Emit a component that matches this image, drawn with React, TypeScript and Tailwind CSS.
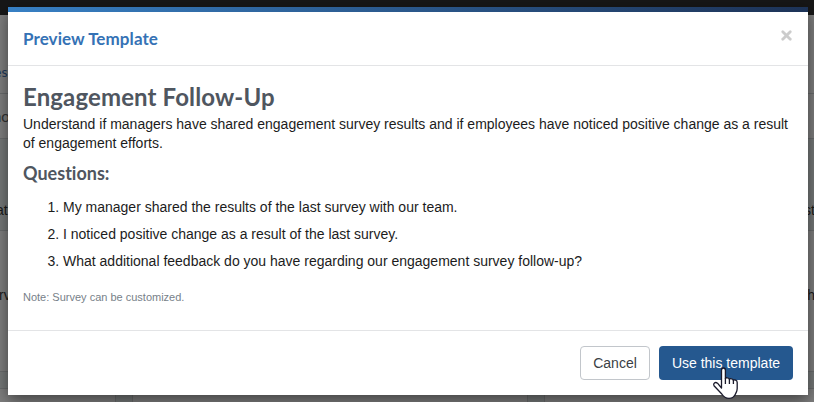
import { X } from 'lucide-react';

const questions = [
  'My manager shared the results of the last survey with our team.',
  'I noticed positive change as a result of the last survey.',
  'What additional feedback do you have regarding our engagement survey follow-up?',
];

// Page under the dimmed backdrop, only its edges show around the dialog
function PageBehind() {
  return (
    <div className="flex h-full flex-col bg-[#767979] text-[14px] leading-5 text-[#1a1a1a]">
      <div className="h-[15px] bg-[#171717]" />
      <div className="flex h-[79px] items-end border-b border-[#6a6c6d] bg-[#7f7f7f] pb-[11px]">
        <span className="-ml-[6px] font-['Lato',sans-serif] text-[#1c3a5c]">es</span>
      </div>
      <div className="flex h-[45px] items-center border-b border-[#6a6c6d] bg-[#7f7f7f]">
        <span className="-ml-[7px] font-['Lato',sans-serif] text-[15px] text-[#333]">no</span>
      </div>
      <div className="flex h-[92px] items-end justify-between border-b border-[#6a6c6d] pb-[10px]">
        <span className="-ml-[4px]">at</span>
        <span className="-mr-[1px]">st</span>
      </div>
      <div className="flex h-[141px] items-center justify-between border-b border-[#6a6c6d] bg-[#7f7f7f] pb-[12px]">
        <span className="-ml-[1px]">rv</span>
        <span className="-mr-[1px]">h</span>
      </div>
      <div className="h-[17px] border-b border-[#6a6c6d]" />
      <div className="flex flex-1 gap-[16px]">
        <div className="w-[116px] border-r border-[#6a6c6d] bg-[#7f7f7f]" />
        <div className="w-[396px] border-x border-[#6a6c6d] bg-[#7f7f7f]" />
        <div className="flex-1 border-l border-[#6a6c6d] bg-[#7f7f7f]" />
      </div>
    </div>
  );
}

function HandCursor() {
  return (
    <svg className="absolute left-[712px] top-[367px]" width="27" height="33" viewBox="0 0 27 33">
      <path
        d="M9.5 21V3.2C9.5 1.8 10.3 1 11.4 1s2 .8 2 2.2v8.1c.5-.8 3.5-.8 4 1 .7-1 3.6-.7 4 1 .8-.7 3.8-.2 3.8 2.1v6.2c0 2.4-.7 3.3-1.5 4.8-1.4 3.7-3.2 5-6.7 5-3.6 0-5.5-1.6-7.2-4.4L2 18.7c-1.1-2 1.1-4.3 3.5-2.5z"
        fill="#fff"
        stroke="#1a1a2b"
        strokeWidth="1.3"
        strokeLinejoin="round"
      />
      <path d="M13.4 11v6M17.4 12v5M21.4 13v4" stroke="#1a1a2b" strokeWidth="1.3" fill="none" />
    </svg>
  );
}

export default function App() {
  return (
    <div className="relative h-[402px] w-[814px] overflow-hidden font-['Liberation_Sans',Arial,sans-serif]">
      <PageBehind />

      <div className="absolute left-2 top-[7px] flex h-[388px] w-[800px] flex-col bg-white text-[14px] text-[#1c1c1c] shadow-[0_5px_15px_rgba(0,0,0,0.5)]">
        <div className="h-[5px] shrink-0 bg-linear-to-r from-[#3780c4] to-[#1d3357]" />

        <header className="flex h-[54px] shrink-0 items-center justify-between border-b border-[#e3e4e6] px-[15px]">
          <h4 className="font-['Lato',sans-serif] text-[17px] font-bold tracking-[0.08px] text-[#3572b5]">Preview Template</h4>
          <button className="-mr-[1px] mb-[6px] text-[#cccccc]" aria-label="Close">
            <X size={15} strokeWidth={4.5} />
          </button>
        </header>

        <div className="h-[264px] shrink-0 px-[15px] pt-[14px]">
          <h2 className="font-['Lato',sans-serif] text-[24px] font-bold leading-[34px] tracking-[0.12px] text-[#4f5660]">Engagement Follow-Up</h2>
          <p className="mt-px leading-[19px]">
            Understand if managers have shared engagement survey results and if employees have noticed positive change as a result of engagement efforts.
          </p>
          <h3 className="mt-[9px] font-['Lato',sans-serif] text-[18px] font-bold leading-[22px] tracking-[0.01px] text-[#4f5660]">Questions:</h3>
          <ol className="mt-[10px] list-decimal pl-10">
            {questions.map((question) => (
              <li key={question} className="leading-[27px]">{question}</li>
            ))}
          </ol>
          <p className="mt-[14px] text-[11px] leading-[16px] text-[#777f89]">Note: Survey can be customized.</p>
        </div>

        <footer className="flex flex-1 items-center justify-end gap-[9px] border-t border-[#e3e4e6] px-[15px]">
          <button className="h-[34px] w-[70px] rounded-[4px] border border-[#c2c6cb] bg-white text-[#3b3f45]">Cancel</button>
          <button className="h-[34px] w-[134px] rounded-[4px] bg-[#25588f] text-white">Use this template</button>
        </footer>
      </div>

      <HandCursor />
    </div>
  );
}
